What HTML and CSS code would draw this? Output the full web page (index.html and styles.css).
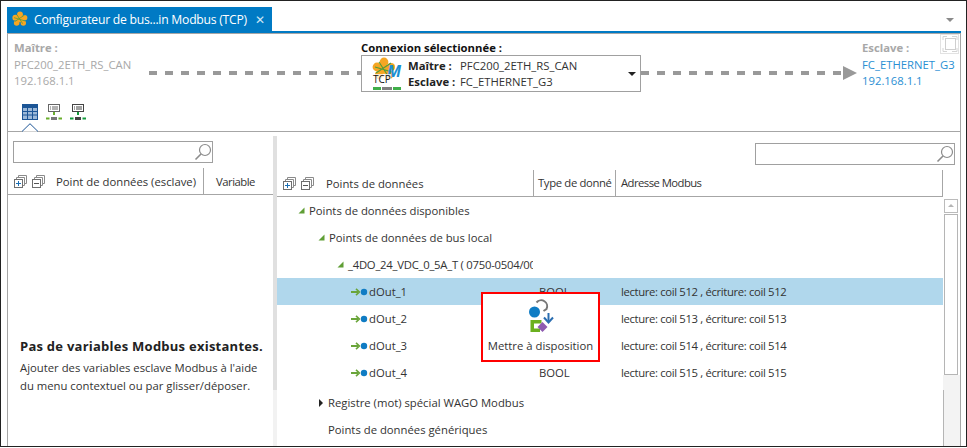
FILE: index.html
```html
<!DOCTYPE html>
<html lang="fr">
<head>
  <meta charset="UTF-8" />
  <title>Configurateur de bus de terrain Modbus (TCP)</title>
  <link rel="stylesheet" href="styles.css">
</head>
<body>

  <svg class="defs" width="0" height="0">
    <symbol id="expand-all" viewBox="0 0 13 13">
      <path d="M4.5 2.5V.5h8v8h-2M2.5 4.5v-2h8v8h-2" fill="none" stroke="#8a8a8a"/>
      <rect x=".5" y="4.5" width="8" height="8" fill="#fff" stroke="#6f6f6f"/>
      <path d="M2 8.5h5M4.5 6v5" stroke="#1b6fb5"/>
    </symbol>
    <symbol id="collapse-all" viewBox="0 0 13 13">
      <path d="M4.5 2.5V.5h8v8h-2M2.5 4.5v-2h8v8h-2" fill="none" stroke="#8a8a8a"/>
      <rect x=".5" y="4.5" width="8" height="8" fill="#fff" stroke="#6f6f6f"/>
      <path d="M2 8.5h5" stroke="#555"/>
    </symbol>
    <symbol id="magnifier" viewBox="0 0 18 18">
      <circle cx="11" cy="7" r="5.5" fill="none" stroke="#8c8c8c" stroke-width="1.2"/>
      <path d="M7 11l-5.500 5.500" stroke="#8c8c8c" stroke-width="1.6"/>
    </symbol>
    <symbol id="out-point" viewBox="0 0 18 8">
      <path d="M0 4h7" stroke="#6aa53a" stroke-width="2"/>
      <path d="M5 .8L8.400 4 5 7.200" fill="none" stroke="#6aa53a" stroke-width="1.6"/>
      <circle cx="13" cy="4" r="3.200" fill="#0f7cc4"/>
    </symbol>
    <symbol id="tree-open" viewBox="0 0 7 7">
      <path d="M6.500.5v6h-6z" fill="#5f9e35"/>
    </symbol>
    <symbol id="flower" viewBox="0 0 24 24">
      <g fill="#f5a623">
        <circle cx="12" cy="5" r="4.400"/>
        <circle cx="5" cy="10" r="4.400"/>
        <circle cx="19" cy="10" r="4"/>
        <circle cx="7" cy="18" r="4.200"/>
        <circle cx="17" cy="18" r="4"/>
        <circle cx="12" cy="12" r="5"/>
      </g>
      <path d="M4 16L19 6M7 5l9 14M3 10l17 5" stroke="#4f9d3a" stroke-width="1.100"/>
    </symbol>
  </svg>

  <div class="frame">
    <div class="tabbar">
      <div class="tab">
        <svg class="tab-logo" width="16" height="16"><use href="#flower"/></svg>
        <span class="tab-title">Configurateur de bus...in Modbus (TCP)</span>
        <span class="tab-close">✕</span>
      </div>
      <span class="tab-menu"></span>
    </div>

    <div class="panel">
      <section class="connection">
        <svg class="fullscreen" width="19" height="20" viewBox="0 0 19 20">
          <rect x=".5" y=".5" width="18" height="19" fill="#fff" stroke="#e2e2e2"/>
          <rect x="5.500" y="4.500" width="10" height="11" fill="none" stroke="#cfcfcf"/>
          <path d="M3 6V2.500h4M12 2.500h5V6M3 14v3.500h4M12 17.500h5V14" fill="none" stroke="#d4d4d4"/>
        </svg>
        <div class="conn-top">
          <div class="device device-master">
            <div class="device-label">Maître :</div>
            <div>PFC200_2ETH_RS_CAN</div>
            <div>192.168.1.1</div>
          </div>
          <div class="dashes dashes-left"></div>
          <div class="selected">
            <div class="selected-label">Connexion sélectionnée :</div>
            <div class="selected-box">
              <div class="tcp-logo">
                <svg class="tcp-flower" width="24" height="24"><use href="#flower"/></svg>
                <span class="tcp-m">M</span>
                <span class="tcp-text">TCP</span>
                <span class="tcp-bars"><i></i><i class="mid"></i><i></i></span>
              </div>
              <div class="selected-rows">
                <div class="selected-row"><b>Maître :</b><span>PFC200_2ETH_RS_CAN</span></div>
                <div class="selected-row"><b>Esclave :</b><span>FC_ETHERNET_G3</span></div>
              </div>
              <span class="caret"></span>
            </div>
          </div>
          <div class="dashes dashes-right"></div>
          <div class="arrow-head"></div>
          <div class="device device-slave">
            <div class="device-label">Esclave :</div>
            <div>FC_ETHERNET_G3</div>
            <div>192.168.1.1</div>
          </div>
        </div>
        <div class="toolbar">
          <svg width="16" height="16" viewBox="0 0 16 16">
            <rect width="16" height="16" fill="#1c5596"/>
            <path d="M1 4h14v11H1z" fill="#9db9d8"/>
            <path d="M1 7.500h14M1 11h14M5.500 4v11M10.500 4v11" stroke="#1c5596"/>
          </svg>
          <svg width="16" height="16" viewBox="0 0 16 16">
            <rect x="2.500" y=".5" width="11" height="7" fill="#fff" stroke="#666"/>
            <path d="M4 3h1M6 3h6M4 5h1M6 5h6" stroke="#666"/>
            <path d="M8 8v3" stroke="#6aae2c" stroke-width="2"/>
            <path d="M0 14.500h3.500M12.500 14.500H16" stroke="#6aae2c" stroke-width="2"/>
            <path d="M5 14.500h6" stroke="#777" stroke-width="3"/>
          </svg>
          <svg width="16" height="16" viewBox="0 0 16 16">
            <rect x="2.500" y=".5" width="11" height="7" fill="#fff" stroke="#444"/>
            <path d="M4 3h1M6 3h6M4 5h1M6 5h6" stroke="#444"/>
            <path d="M8 8v3" stroke="#129a3c" stroke-width="2"/>
            <path d="M0 14.500h3.500M12.500 14.500H16" stroke="#129a3c" stroke-width="2"/>
            <path d="M5 14.500h6" stroke="#444" stroke-width="3"/>
          </svg>
        </div>
        <svg class="chevron" width="16" height="9" viewBox="0 0 16 9">
          <path d="M0 8.500L8 .7l8 7.800" fill="#fff" stroke="#1c5596"/>
        </svg>
      </section>

      <div class="workspace">
        <aside class="slave-pane">
          <div class="search search-left">
            <svg width="18" height="18"><use href="#magnifier"/></svg>
          </div>
          <div class="slave-head">
            <div class="head-icons">
              <svg width="13" height="13"><use href="#expand-all"/></svg>
              <svg width="13" height="13"><use href="#collapse-all"/></svg>
            </div>
            <div class="slave-col-name">Point de données (esclave)</div>
            <div class="slave-col-var">Variable</div>
          </div>
          <div class="empty">
            <div class="empty-title">Pas de variables Modbus existantes.</div>
            <p>Ajouter des variables esclave Modbus à l'aide du menu contextuel ou par glisser/déposer.</p>
          </div>
        </aside>

        <div class="splitter"></div>

        <div class="points-pane">
          <div class="search-row">
            <div class="search">
              <svg width="18" height="18"><use href="#magnifier"/></svg>
            </div>
          </div>
          <div class="points-body">
            <div class="points">
              <div class="points-head">
                <div class="col-name">
                  <div class="head-icons">
                    <svg width="13" height="13"><use href="#expand-all"/></svg>
                    <svg width="13" height="13"><use href="#collapse-all"/></svg>
                  </div>
                  <span class="head-title">Points de données</span>
                </div>
                <div class="col-type">Type de donné</div>
                <div class="col-addr">Adresse Modbus</div>
              </div>

              <div class="row lvl1">
                <div class="col-name"><svg width="7" height="7"><use href="#tree-open"/></svg><span>Points de données disponibles</span></div>
              </div>
              <div class="row lvl2">
                <div class="col-name"><svg width="7" height="7"><use href="#tree-open"/></svg><span>Points de données de bus local</span></div>
              </div>
              <div class="row lvl3">
                <div class="col-name"><svg width="7" height="7"><use href="#tree-open"/></svg><span>_4DO_24_VDC_0_5A_T ( 0750-0504/002 )</span></div>
              </div>
              <div class="row lvl4 selected-point">
                <div class="col-name"><svg width="18" height="8"><use href="#out-point"/></svg><span>dOut_1</span></div>
                <div class="col-type">BOOL</div>
                <div class="col-addr">lecture: coil 512 , écriture: coil 512</div>
              </div>
              <div class="row lvl4">
                <div class="col-name"><svg width="18" height="8"><use href="#out-point"/></svg><span>dOut_2</span></div>
                <div class="col-type">BOOL</div>
                <div class="col-addr">lecture: coil 513 , écriture: coil 513</div>
              </div>
              <div class="row lvl4">
                <div class="col-name"><svg width="18" height="8"><use href="#out-point"/></svg><span>dOut_3</span></div>
                <div class="col-type">BOOL</div>
                <div class="col-addr">lecture: coil 514 , écriture: coil 514</div>
              </div>
              <div class="row lvl4">
                <div class="col-name"><svg width="18" height="8"><use href="#out-point"/></svg><span>dOut_4</span></div>
                <div class="col-type">BOOL</div>
                <div class="col-addr">lecture: coil 515 , écriture: coil 515</div>
              </div>
              <div class="row lvl2b wago">
                <div class="col-name"><i class="tree-closed"></i><span>Registre (mot) spécial WAGO Modbus</span></div>
              </div>
              <div class="row lvl2b">
                <div class="col-name"><span>Points de données génériques</span></div>
              </div>
            </div>

            <div class="scrollbar">
              <div class="scroll-up"></div>
              <div class="scroll-thumb"></div>
            </div>
          </div>
        </div>
      </div>
    </div>

    <div class="callout">
      <svg width="28" height="36" viewBox="0 0 28 36">
        <path d="M9.500 4.500a6 6 0 0 1 10 6.500l-3 2" fill="none" stroke="#777" stroke-width="2"/>
        <circle cx="7.500" cy="14" r="5.500" fill="#0f7cc4"/>
        <path d="M21.500 15v9" stroke="#2a6db0" stroke-width="2"/>
        <path d="M17 19.500l4.500 5 4.500-5" fill="none" stroke="#2a6db0" stroke-width="2"/>
        <path d="M3.500 22h11v3.500H7v5h6V34H3.500z" fill="#6bb01f"/>
        <path d="M15.500 24l5 5-5 5-5-5z" fill="#8e5bb0"/>
      </svg>
      <div>Mettre à disposition</div>
    </div>
  </div>

</body>
</html>
```

FILE: styles.css
```css
* {
  box-sizing: border-box;
}
html, body {
  margin: 0;
  padding: 0;
  background: #fff;
}
body {
  font-family: 'Open Sans', 'Liberation Sans', sans-serif;
  font-size: 11.3px;
  color: #333;
  width: 967px;
  height: 448px;
  overflow: hidden;
}
.defs {
  position: absolute;
}
svg {
  display: block;
  flex: none;
}
.frame {
  position: relative;
  width: 967px;
  height: 447px;
  border: 1px solid #222;
  padding: 6px 5px 0 6px;
  overflow: hidden;
}

/* tab strip */
.tabbar {
  display: flex;
  justify-content: space-between;
  height: 26px;
  border-bottom: 2px solid #007ac4;
}
.tab {
  display: flex;
  align-items: center;
  width: 265px;
  height: 24px;
  padding-left: 5px;
  background: #007ac4;
  color: #fff;
  font-size: 12.2px;
}
.tab-title {
  margin-left: 6px;
  letter-spacing: -.25px;
  white-space: nowrap;
}
.tab-close {
  margin-left: 8px;
  font-size: 12px;
  color: #cfe6f5;
}
.tab-menu {
  margin: 11px 7px 0 0;
  width: 0;
  height: 0;
  border-left: 4px solid transparent;
  border-right: 4px solid transparent;
  border-top: 4px solid #8a8a8a;
}

.panel {
  height: 413px;
  border-top: 1px solid #a6a6a6;
  border-left: 1px solid #a6a6a6;
  border-right: 1px solid #a6a6a6;
}

/* connection header */
.connection {
  position: relative;
  height: 98px;
  border-bottom: 1px solid #a6a6a6;
}
.fullscreen {
  position: absolute;
  top: 0;
  right: 1px;
}
.conn-top {
  display: flex;
  align-items: flex-start;
  height: 70px;
  padding-left: 6px;
}
.device {
  padding-top: 5px;
  line-height: 16.500px;
  color: #a8a8a8;
  white-space: nowrap;
}
.device-master {
  width: 135px;
}
.device-slave {
  margin-left: 5px;
  color: #2a8fd3;
}
.device-label {
  font-weight: 700;
  color: #a8a8a8;
  margin-top: 1px;
}
.dashes {
  height: 4px;
  margin-top: 37px;
  background: repeating-linear-gradient(90deg, #999 0 8px, transparent 8px 16px);
}
.dashes-left {
  width: 212px;
}
.dashes-right {
  width: 202px;
}
.arrow-head {
  margin-top: 32px;
  width: 0;
  height: 0;
  border-left: 14px solid #999;
  border-top: 7px solid transparent;
  border-bottom: 7px solid transparent;
}
.selected {
  width: 280px;
  padding-top: 6px;
}
.selected-label {
  font-weight: 700;
  color: #111;
  line-height: 15px;
}
.selected-box {
  display: flex;
  align-items: center;
  height: 37px;
  border: 1px solid #a0a0a0;
  padding-left: 10px;
  background: #fff;
}
.tcp-logo {
  position: relative;
  width: 30px;
  height: 33px;
  flex: none;
}
.tcp-flower {
  position: absolute;
  left: 0;
  top: 0;
}
.tcp-m {
  position: absolute;
  left: 15px;
  top: 6px;
  font-size: 16px;
  line-height: 16px;
  font-weight: 700;
  font-style: italic;
  color: #1b8fd0;
}
.tcp-text {
  position: absolute;
  left: 1px;
  top: 17px;
  font-size: 10px;
  line-height: 11px;
  color: #111;
  background: rgba(255, 255, 255, .75);
}
.tcp-bars {
  position: absolute;
  left: 1px;
  bottom: 0;
  display: flex;
  gap: 1px;
}
.tcp-bars i {
  width: 8px;
  height: 3px;
  background: #3fae49;
}
.tcp-bars i.mid {
  width: 10px;
  background: #7f7f7f;
}
.selected-rows {
  margin-left: 6px;
  line-height: 16px;
  flex: 1;
}
.selected-row {
  display: flex;
  color: #333;
}
.selected-row b {
  width: 52px;
  color: #222;
}
.caret {
  margin-right: 4px;
  width: 0;
  height: 0;
  border-left: 4px solid transparent;
  border-right: 4px solid transparent;
  border-top: 4px solid #222;
}
.toolbar {
  display: flex;
  gap: 8px;
  padding-left: 14px;
}
.chevron {
  position: relative;
  margin: 3px 0 -1px 14px;
}

/* lower part */
.workspace {
  display: flex;
  height: 314px;
}
.slave-pane {
  width: 265px;
  flex: none;
}
.search {
  position: relative;
  width: 200px;
  height: 22px;
  border: 1px solid #a0a0a0;
  background: #fff;
}
.search svg {
  position: absolute;
  right: 0;
  top: 1px;
}
.search-left {
  margin: 9px 0 0 5px;
}
.slave-head {
  display: flex;
  align-items: center;
  height: 32px;
  padding-top: 5px;
  border-bottom: 1px solid #a6a6a6;
}
.head-icons {
  display: flex;
  gap: 5px;
  width: 42px;
  padding-left: 6px;
  flex: none;
}
.slave-col-name {
  width: 153px;
  padding-left: 6px;
  white-space: nowrap;
}
.slave-col-var {
  flex: 1;
  height: 27px;
  line-height: 27px;
  padding-left: 12px;
  letter-spacing: -.5px;
  border-left: 1px solid #a6a6a6;
}
.empty {
  padding: 142px 0 0 12px;
  width: 262px;
}
.empty-title {
  font-weight: 700;
  font-size: 13px;
  line-height: 18px;
  letter-spacing: .25px;
  color: #222;
  white-space: nowrap;
}
.empty p {
  margin: 4px 0 0;
  line-height: 18px;
}
.splitter {
  width: 4px;
  margin-top: 4px;
  flex: none;
  background: linear-gradient(#e0e0e0 0 254px, #f2f2f2 254px);
}
.points-pane {
  flex: 1;
  min-width: 0;
}
.search-row {
  display: flex;
  justify-content: flex-end;
  padding: 11px 5px 0 0;
}
.points-body {
  display: flex;
  margin-top: 5px;
  height: 276px;
}
.points {
  width: 666px;
  flex: none;
}
.points-head {
  display: flex;
  align-items: center;
  height: 27px;
  border-bottom: 1px solid #a6a6a6;
  border-right: 1px solid #a6a6a6;
}
.points-head .col-name {
  display: flex;
  align-items: center;
}
.points-head .col-type,
.points-head .col-addr {
  height: 26px;
  line-height: 26px;
  border-left: 1px solid #a6a6a6;
}
.points-head .col-type {
  padding-left: 4px;
  letter-spacing: -.35px;
}
.points-head .col-addr {
  letter-spacing: -.55px;
}
.head-title {
  margin-left: 7px;
}
.col-name {
  width: 256px;
  flex: none;
  overflow: hidden;
  white-space: nowrap;
}
.col-type {
  width: 82px;
  flex: none;
  padding-left: 5px;
  overflow: hidden;
  white-space: nowrap;
}
.col-addr {
  flex: 1;
  padding-left: 5px;
  white-space: nowrap;
}
.row {
  display: flex;
  align-items: center;
  height: 27px;
}
.row .col-name {
  display: flex;
  align-items: center;
}
.row .col-name span {
  margin-left: 4px;
}
.row .col-type {
  padding-left: 6px;
}
.row .col-addr {
  padding-left: 6px;
  letter-spacing: -.35px;
}
.lvl1 .col-name {
  padding-left: 21px;
}
.lvl2 .col-name {
  padding-left: 41px;
}
.lvl3 .col-name {
  padding-left: 60px;
  letter-spacing: -.25px;
}
.lvl4 .col-name {
  padding-left: 74px;
}
.lvl4 .col-name span {
  margin-left: 0;
}
.lvl2b .col-name {
  padding-left: 47px;
}
.lvl2b .col-name span {
  margin-left: 4px;
}
.wago {
  margin-top: 3px;
}
.wago .col-name {
  padding-left: 42px;
}
.tree-closed {
  width: 0;
  height: 0;
  border-left: 4px solid #222;
  border-top: 4px solid transparent;
  border-bottom: 4px solid transparent;
  margin-right: 1px;
}
.selected-point {
  background: #b0d7ec;
}
.scrollbar {
  flex: 1;
  padding: 29px 2px 0 1px;
  background:
    linear-gradient(90deg, #b5b5b5 0 1px, transparent 1px) 0 220px / 100% 100% no-repeat,
    linear-gradient(#fff 0 205px, #f3f3f3 205px);
}
.scroll-up {
  position: relative;
  height: 14px;
  width: 14px;
  border: 1px solid #bbb;
  background: #fff;
}
.scroll-up::after {
  content: "";
  position: absolute;
  left: 3px;
  top: 4px;
  border-left: 3px solid transparent;
  border-right: 3px solid transparent;
  border-bottom: 3px solid #b5b5b5;
}
.scroll-thumb {
  height: 161px;
  width: 14px;
  margin-top: 1px;
  border: 1px solid #b5b5b5;
  background: #fff;
}

/* red highlighted tooltip */
.callout {
  position: absolute;
  left: 480px;
  top: 291px;
  width: 119px;
  height: 70px;
  border: 2px solid #f00;
  background: #fff;
  display: flex;
  flex-direction: column;
  align-items: center;
  padding-top: 4px;
  white-space: nowrap;
}
.callout div {
  margin-top: 4px;
}
```
